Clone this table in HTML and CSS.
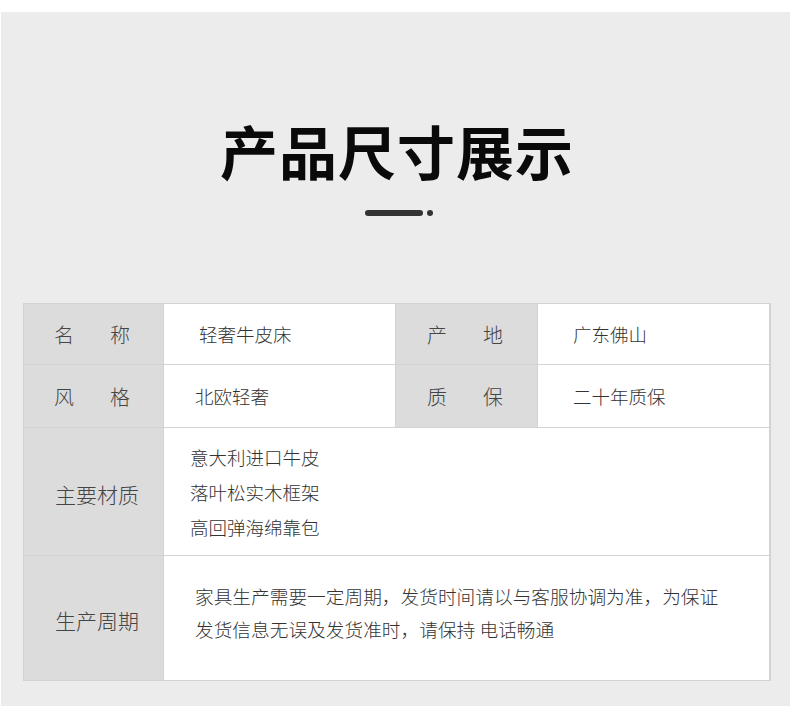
FILE: index.html
```html
<!DOCTYPE html>
<html lang="zh-CN">
<head>
    <meta charset="UTF-8" />
    <meta name="viewport" content="width=device-width, initial-scale=1.0"/>
    <title>产品尺寸展示</title>
    <link rel="stylesheet" href="styles.css">
</head>
<body>

<div class="page">
    <h1 class="title">产品尺寸展示</h1>

    <div class="divider">
        <span class="divider-bar"></span>
        <span class="divider-dot"></span>
    </div>

    <div class="spec-table">
        <div class="cell label"><span>名</span><span>称</span></div>
        <div class="cell value">轻奢牛皮床</div>
        <div class="cell label"><span>产</span><span>地</span></div>
        <div class="cell value">广东佛山</div>

        <div class="cell label"><span>风</span><span>格</span></div>
        <div class="cell value value-tight">北欧轻奢</div>
        <div class="cell label"><span>质</span><span>保</span></div>
        <div class="cell value">二十年质保</div>

        <div class="cell label label-long">主要材质</div>
        <div class="cell value value-wide value-list">
            <div>意大利进口牛皮</div>
            <div>落叶松实木框架</div>
            <div>高回弹海绵靠包</div>
        </div>

        <div class="cell label label-long">生产周期</div>
        <div class="cell value value-wide value-note">
            家具生产需要一定周期，发货时间请以与客服协调为准，为保证<br>
            发货信息无误及发货准时，请保持 电话畅通
        </div>
    </div>
</div>

</body>
</html>
```

FILE: styles.css
```css
body, html {
    margin: 0;
    padding: 0;
    background: #fff;
    font-family: "Noto Sans CJK SC", "Noto Sans", sans-serif;
}

.page {
    margin-top: 12px;
    margin-left: 1px;
    background: #ececec;
    min-height: 694px;
    padding-top: 109px;
    box-sizing: border-box;
    overflow: hidden;
}

.title {
    margin: 0;
    text-align: center;
    font-size: 58px;
    line-height: 58px;
    font-weight: 700;
    color: #0a0a0a;
    letter-spacing: 1px;
    padding-left: 3px;
}

.divider {
    display: flex;
    justify-content: center;
    align-items: center;
    gap: 4px;
    margin-top: 31px;
    padding-left: 7px;
}

.divider-bar {
    width: 58px;
    height: 6px;
    border-radius: 3px;
    background: #333;
}

.divider-dot {
    width: 6px;
    height: 6px;
    border-radius: 50%;
    background: #333;
}

.spec-table {
    display: grid;
    grid-template-columns: 139px 231px 141px 231px;
    grid-template-rows: 60px 62px 127px 124px;
    gap: 1px;
    padding: 1px;
    width: 746px;
    margin: 87px 0 0 22px;
    background: #d3d3d3;
}

.cell {
    display: flex;
    align-items: center;
    background: #fff;
    color: #333;
    font-size: 18.5px;
    font-weight: 300;
}

.label {
    justify-content: center;
    gap: 36px;
    background: #dcdcdc;
    color: #444;
    font-size: 20px;
    padding-right: 3px;
}

.label-long {
    font-size: 21px;
    padding: 4px 0 0 7px;
}

.value {
    padding-left: 35px;
}

.value-tight {
    padding-left: 31px;
}

.value-wide {
    grid-column: span 3;
}

.value-list {
    flex-direction: column;
    align-items: flex-start;
    justify-content: center;
    padding-left: 26px;
    line-height: 35px;
    padding-top: 2px;
}

.value-note {
    padding-left: 31px;
    font-size: 18.7px;
    line-height: 33px;
    padding-bottom: 12px;
}
```
